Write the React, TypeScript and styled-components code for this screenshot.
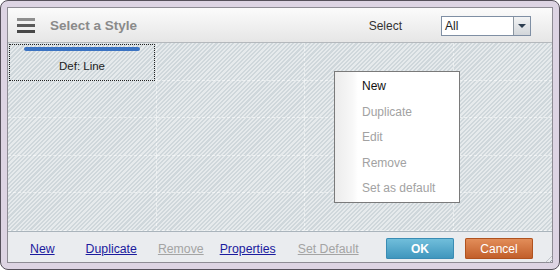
import React from "react";
import styled, { createGlobalStyle } from "styled-components";

const GlobalStyle = createGlobalStyle`
    html, body {
        margin: 0;
        padding: 0;
        background: #ffffff;
    }
    body {
        font-family: "Liberation Sans", Arial, sans-serif;
    }
`;

const Frame = styled.div`
    width: 560px;
    height: 270px;
    box-sizing: border-box;
    border: 1px solid #55505a;
    border-radius: 8px;
    background: #ddd4e3;
    padding: 6px 6px 6px 6px;
    display: flex;
`;

const Inner = styled.div`
    flex: 1;
    display: flex;
    flex-direction: column;
    border: 1px solid #8e8c94;
    background: #eceef0;
    overflow: hidden;
`;

const Header = styled.div`
    height: 35px;
    flex-shrink: 0;
    display: flex;
    align-items: center;
    padding: 1px 0 0 9px;
    box-sizing: border-box;
    background: linear-gradient(#fbfbfb, #e6e6e6);
    border-bottom: 1px solid #b4b8bc;
`;

const Burger = styled.div`
    width: 18px;
    display: flex;
    flex-direction: column;
    gap: 3px;
    margin-right: 15px;
`;

const BurgerBar = styled.span<{ $c: string }>`
    display: block;
    height: 3px;
    background: ${(p) => p.$c};
`;

const Title = styled.div`
    font-size: 13.5px;
    font-weight: bold;
    color: #8a8a8a;
    flex: 1;
`;

const SelectLabel = styled.div`
    font-size: 12px;
    color: #333;
    margin-right: 39px;
`;

const SelectBox = styled.div`
    width: 90px;
    height: 20px;
    box-sizing: border-box;
    border: 1px solid #7f8fa4;
    background: #fff;
    display: flex;
    align-items: center;
    margin-right: 21px;
    font-size: 12px;
    color: #222;
`;

const SelectValue = styled.span`
    flex: 1;
    padding-left: 3px;
`;

const SelectArrow = styled.div`
    width: 16px;
    height: 18px;
    border-left: 1px solid #8c96a0;
    background: linear-gradient(#f2f3f4, #d2d6da);
    display: flex;
    align-items: center;
    justify-content: center;
    &::after {
        content: "";
        border-left: 4px solid transparent;
        border-right: 4px solid transparent;
        border-top: 4px solid #2c3e50;
    }
`;

const Canvas = styled.div`
    position: relative;
    flex: 1;
    background: repeating-linear-gradient(
        135deg,
        #cfd7db 0px,
        #cfd7db 1.5px,
        #e6eaec 1.5px,
        #e6eaec 3px
    );
    border-bottom: 1px solid #aab4bc;
    display: grid;
    grid-template-columns: repeat(4, 148.5px);
    grid-template-rows: repeat(5, 37.5px);
`;

const Cell = styled.div`
    border-right: 1px dashed rgba(255, 255, 255, 0.55);
    border-bottom: 1px dashed rgba(255, 255, 255, 0.55);
    box-sizing: border-box;
`;

const StyleCard = styled.div`
    margin: 1px 0 0 1px;
    height: 37px;
    width: 146px;
    box-sizing: border-box;
    border: 1px dotted #222;
    display: flex;
    flex-direction: column;
    align-items: center;
    padding-top: 2px;
`;

const LineSample = styled.div`
    width: 116px;
    height: 4px;
    border-radius: 2px;
    background: #3b73c2;
`;

const CardLabel = styled.div`
    font-size: 11.5px;
    color: #222;
    margin-top: 9px;
`;

const Menu = styled.div`
    position: absolute;
    left: 326px;
    top: 28px;
    width: 126px;
    height: 132px;
    box-sizing: border-box;
    border: 1px solid #7a7a7a;
    background: linear-gradient(90deg, #ececec 0px, #f8f8f8 18px, #fff 23px);
    padding: 2px 0 0 27px;
    display: flex;
    flex-direction: column;
`;

const MenuItem = styled.div<{ $disabled?: boolean }>`
    height: 25.6px;
    line-height: 25.6px;
    font-size: 12px;
    color: ${(p) => (p.$disabled ? "#a2a2a2" : "#111")};
`;

const Footer = styled.div`
    height: 34px;
    flex-shrink: 0;
    display: flex;
    align-items: center;
    padding-left: 22px;
    background: #eaecef;
`;

const FooterLink = styled.a<{ $disabled?: boolean; $gap: number }>`
    font-size: 12.3px;
    text-decoration: underline;
    color: ${(p) => (p.$disabled ? "#a4a4a4" : "#1b1b9e")};
    margin-right: ${(p) => p.$gap}px;
    cursor: pointer;
`;

const Spacer = styled.div`
    flex: 1;
`;

const ActionButton = styled.button<{ $tone: "blue" | "orange" }>`
    width: 68px;
    height: 21px;
    border: none;
    border-radius: 2px;
    margin-right: ${(p) => (p.$tone === "blue" ? 11 : 19)}px;
    font-family: "Liberation Sans", Arial, sans-serif;
    font-size: 12px;
    font-weight: ${(p) => (p.$tone === "blue" ? "bold" : "normal")};
    color: #fff;
    background: ${(p) =>
        p.$tone === "blue"
            ? "linear-gradient(#73c0dc, #3d94bc)"
            : "linear-gradient(#e4905c, #c05c28)"};
    box-shadow: inset 0 0 0 1px ${(p) => (p.$tone === "blue" ? "#3a8cb4" : "#b0521f")};
    padding: 0;
`;

const Grip = styled.div`
    position: absolute;
    right: 7px;
    bottom: 7px;
    width: 8px;
    height: 8px;
    background: repeating-linear-gradient(135deg, transparent 0 2px, #9aa0a8 2px 3px);
    clip-path: polygon(100% 0, 100% 100%, 0 100%);
`;

const Root = styled.div`
    position: relative;
    width: 560px;
    height: 270px;
`;

const menuItems = [
    { label: "New", disabled: false },
    { label: "Duplicate", disabled: true },
    { label: "Edit", disabled: true },
    { label: "Remove", disabled: true },
    { label: "Set as default", disabled: true },
];

const footerLinks = [
    { label: "New", disabled: false, gap: 31 },
    { label: "Duplicate", disabled: false, gap: 21 },
    { label: "Remove", disabled: true, gap: 16 },
    { label: "Properties", disabled: false, gap: 22 },
    { label: "Set Default", disabled: true, gap: 0 },
];

export default function App() {
    const cells = Array.from({ length: 20 });
    return (
        <>
            <GlobalStyle />
            <Root>
                <Frame>
                    <Inner>
                        <Header>
                            <Burger>
                                <BurgerBar $c="#8e8e8e" />
                                <BurgerBar $c="#5a5a5a" />
                                <BurgerBar $c="#474747" />
                            </Burger>
                            <Title>Select a Style</Title>
                            <SelectLabel>Select</SelectLabel>
                            <SelectBox>
                                <SelectValue>All</SelectValue>
                                <SelectArrow />
                            </SelectBox>
                        </Header>
                        <Canvas>
                            {cells.map((_, i) => (
                                <Cell key={i}>
                                    {i === 0 ? (
                                        <StyleCard>
                                            <LineSample />
                                            <CardLabel>Def: Line</CardLabel>
                                        </StyleCard>
                                    ) : null}
                                </Cell>
                            ))}
                            <Menu>
                                {menuItems.map((m) => (
                                    <MenuItem key={m.label} $disabled={m.disabled}>
                                        {m.label}
                                    </MenuItem>
                                ))}
                            </Menu>
                        </Canvas>
                        <Footer>
                            {footerLinks.map((l) => (
                                <FooterLink key={l.label} $disabled={l.disabled} $gap={l.gap}>
                                    {l.label}
                                </FooterLink>
                            ))}
                            <Spacer />
                            <ActionButton $tone="blue">OK</ActionButton>
                            <ActionButton $tone="orange">Cancel</ActionButton>
                        </Footer>
                    </Inner>
                </Frame>
                <Grip />
            </Root>
        </>
    );
}
